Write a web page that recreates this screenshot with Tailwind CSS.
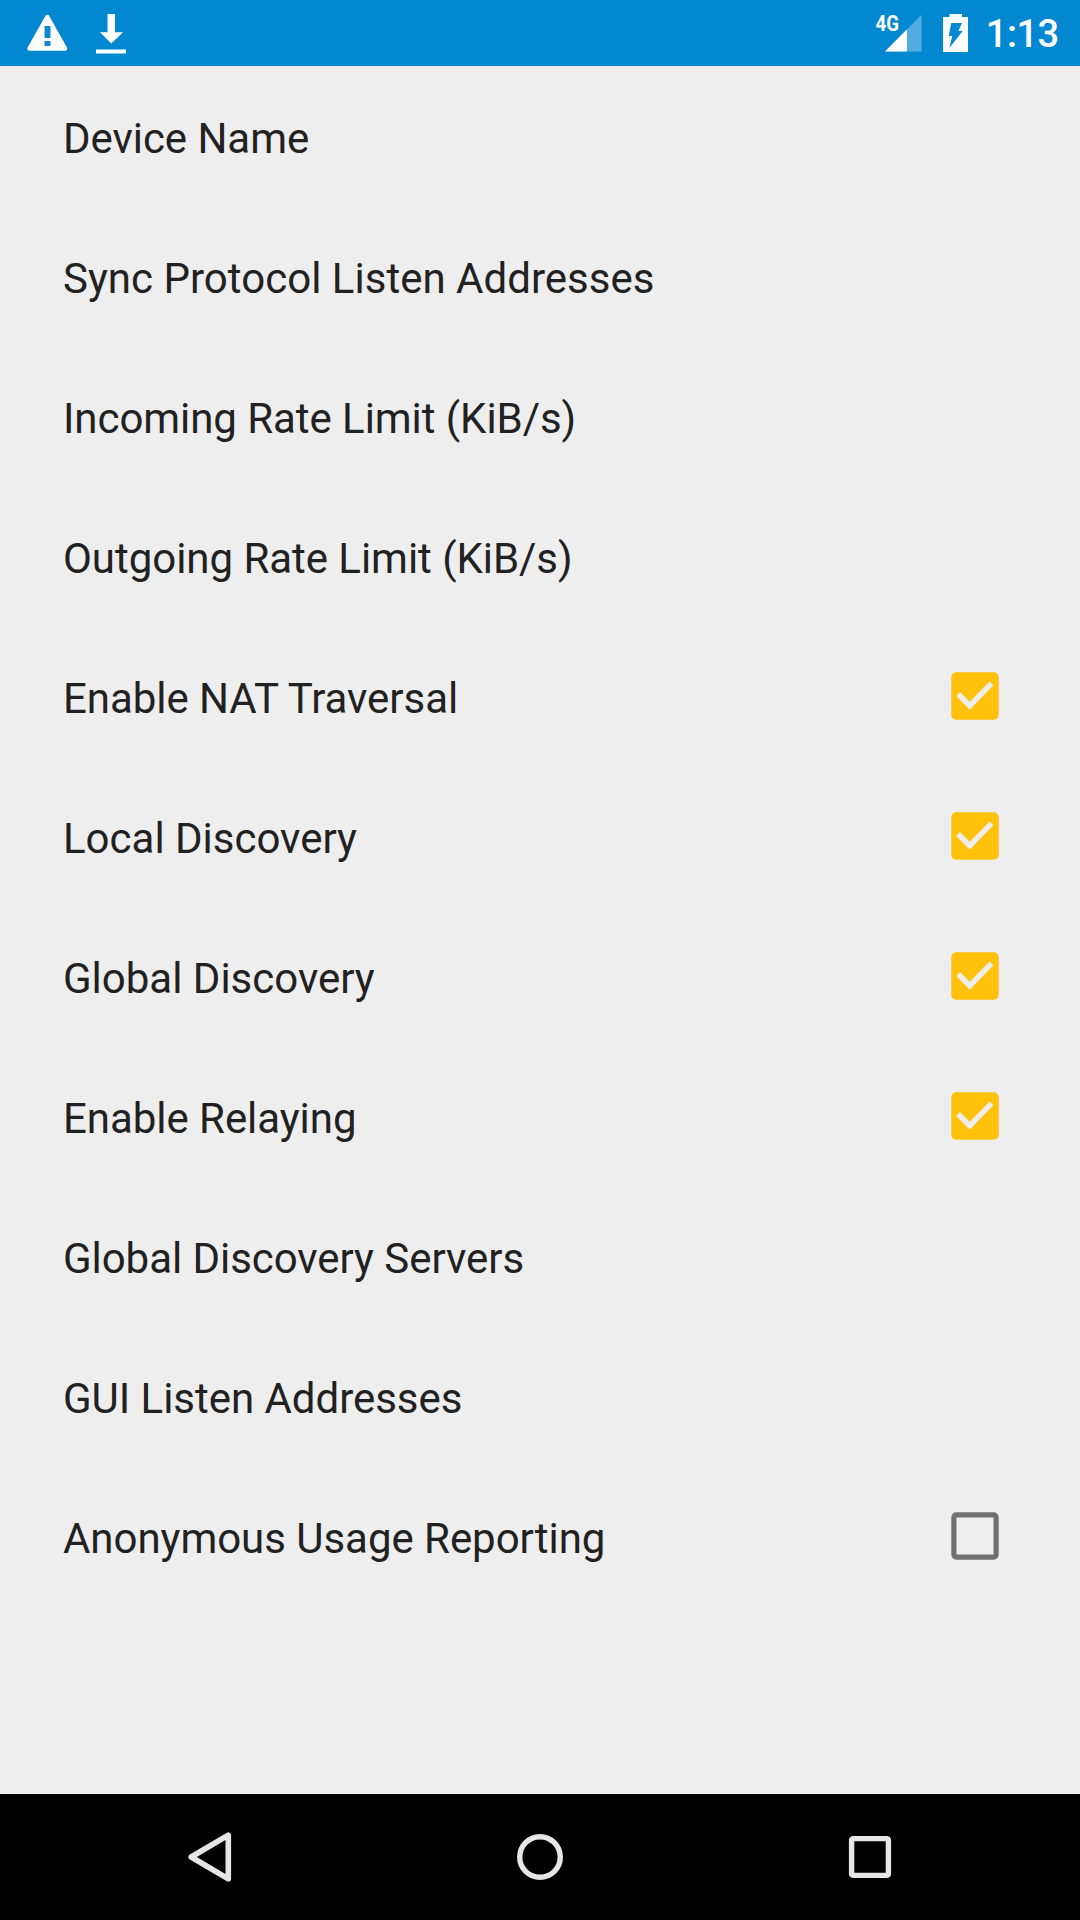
<!DOCTYPE html>
<html lang="en">
<head>
<meta charset="utf-8">
<title>Settings</title>
<script src="https://cdn.jsdelivr.net/npm/@tailwindcss/browser@4"></script>
</head>
<body class="flex h-[1920px] w-[1080px] flex-col overflow-hidden bg-[#eeeeee] font-[Roboto,sans-serif] text-[#212121]">
<svg class="hidden">
  <symbol id="checked" viewBox="0 0 48 48">
    <rect x=".3" y=".3" width="47.4" height="47.4" rx="5" fill="#ffc10a"/>
    <path d="M9 20.2 18.7 29.900 38.700 9.700 42.200 13.300 18.700 37.400 5.400 24Z" fill="#eee" stroke="#eee" stroke-width=".4"/>
  </symbol>
</svg>
<header class="flex h-[66px] shrink-0 items-center justify-between bg-[#0288d1] text-white">
  <svg class="h-[66px] w-[160px]" viewBox="0 0 160 66" fill="#fff">
    <path d="M47.3 17 65 48.5H29.5Z" stroke="#fff" stroke-width="4.4" stroke-linejoin="round"/>
    <path d="M44.5 26h6v12h-6ZM44.5 41h6v5h-6Z" fill="#0e88cc"/>
    <path d="M107.5 14h7.5v18.3h8L111.3 43.5 100 32.3h7.5ZM96 49.5h30v4H96Z"/>
  </svg>
  <svg class="h-[66px] w-[220px]" viewBox="0 0 220 66" fill="#fff">
    <text x="15.6" y="31.2" font-size="22.5" font-weight="700" textLength="23.5" lengthAdjust="spacingAndGlyphs">4G</text>
    <path d="M61.5 14.8V51.5H25Z" fill="#52ace0"/>
    <path d="M47 29.3V51.5H25Z"/>
    <path fill-rule="evenodd" d="M83 17h6.5v-3h12.5v3h6v35H83ZM91.3 23 88.7 36h3.6L89.3 48 102.7 31h-4.4L102 23Z"/>
    <text x="125.8" y="47.2" font-size="38" font-weight="500" textLength="73.300" lengthAdjust="spacing">1:13</text>
  </svg>
</header>
<main class="flex-1 pt-[2px] pr-[81px] pl-[63px] text-[42px]">
  <div class="flex h-[140px] items-center tracking-[-0.05px]">Device Name</div>
  <div class="flex h-[140px] items-center tracking-[0.02px]">Sync Protocol Listen Addresses</div>
  <div class="flex h-[140px] items-center tracking-[-0.06px]">Incoming Rate Limit (KiB/s)</div>
  <div class="flex h-[140px] items-center tracking-[-0.04px]">Outgoing Rate Limit (KiB/s)</div>
  <div class="flex h-[140px] items-center justify-between tracking-[-0.05px]"><span>Enable NAT Traversal</span><svg class="mb-1 size-12"><use href="#checked"/></svg></div>
  <div class="flex h-[140px] items-center justify-between"><span>Local Discovery</span><svg class="mb-1 size-12"><use href="#checked"/></svg></div>
  <div class="flex h-[140px] items-center justify-between"><span>Global Discovery</span><svg class="mb-1 size-12"><use href="#checked"/></svg></div>
  <div class="flex h-[140px] items-center justify-between tracking-[-0.05px]"><span>Enable Relaying</span><svg class="mb-1 size-12"><use href="#checked"/></svg></div>
  <div class="flex h-[140px] items-center tracking-[-0.05px]">Global Discovery Servers</div>
  <div class="flex h-[140px] items-center tracking-[-0.03px]">GUI Listen Addresses</div>
  <div class="flex h-[140px] items-center justify-between tracking-[-0.04px]"><span>Anonymous Usage Reporting</span><svg class="mb-1 size-12" viewBox="0 0 48 48"><rect x="2.9" y="2.9" width="42.2" height="42.2" rx="2.5" fill="none" stroke="#707070" stroke-width="5.2"/></svg></div>
</main>
<nav class="flex h-[126px] shrink-0 items-center justify-between bg-black px-[180px]">
  <svg class="size-[60px]" viewBox="0 0 60 60" fill="none" stroke="#e6e6e6" stroke-width="5.6" stroke-linejoin="round"><path d="M11.200 30 48.300 8.200V51.800Z"/></svg>
  <svg class="size-[60px]" viewBox="0 0 60 60" fill="none" stroke="#e6e6e6" stroke-width="5.4"><circle cx="30" cy="30" r="20.3"/></svg>
  <svg class="size-[60px]" viewBox="0 0 60 60" fill="none" stroke="#e6e6e6" stroke-width="5.4"><rect x="11.6" y="11.6" width="36.8" height="36.8" rx="1.5"/></svg>
</nav>
</body>
</html>
